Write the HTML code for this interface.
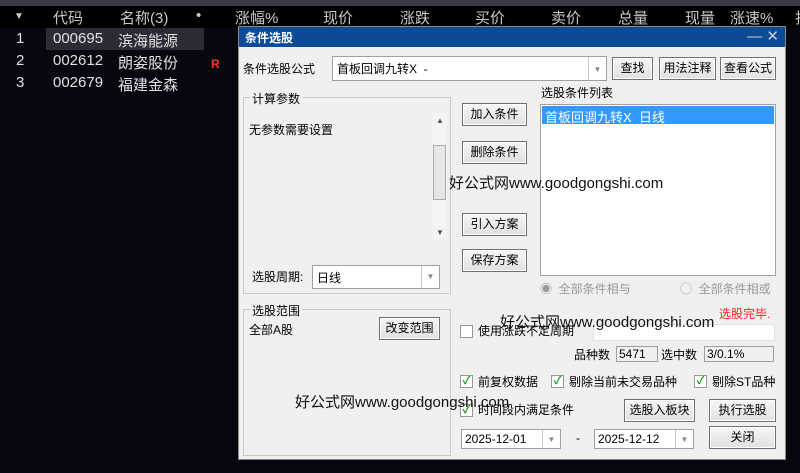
<!DOCTYPE html><html><head><meta charset="utf-8"><style>
*{margin:0;padding:0;box-sizing:border-box}
body{width:800px;height:473px;background:#07070f;font-family:"Liberation Sans","Noto Sans CJK SC",sans-serif;position:relative;overflow:hidden;color:#d8d8d8}
.a{position:absolute;white-space:nowrap}
.h{font-size:15px;color:#c8c8c8;top:7px}
.r{font-size:15px;color:#e0e0e0}
#dlg{position:absolute;left:238px;top:26px;width:548px;height:434px;background:#f0f0f0;border:1px solid #888;font-size:12px;color:#000}
#dlg .a{font-size:12px;line-height:16px}
.t{position:absolute;left:0;top:0;width:100%;height:20px;background:#0d4b96;color:#fff;font-weight:bold;padding:2px 6px}
.btn{position:absolute;border:1px solid #707070;background:linear-gradient(#f6f6f6,#e0e0e0);text-align:center;font-size:12px;line-height:20px;box-shadow:inset 0 0 0 1px #fff}
.box{position:absolute;background:#fff;border:1px solid #a0a0a0}
.grp{position:absolute;border:1px solid #c8c8c8}
.lg{position:absolute;top:-8px;left:6px;background:#f0f0f0;padding:0 2px;font-size:12px}
.dd{position:absolute;right:0;top:0;bottom:0;width:18px;border-left:1px solid #c8c8c8;color:#888;font-size:8px;text-align:center;padding-top:6px}
.cb{position:absolute;width:13px;height:13px;border:1px solid #999;background:#fff;font-size:11px;color:#1a9a1a;line-height:11px;text-align:center;font-weight:bold}
.wm{position:absolute;font-size:15px;color:#111;white-space:nowrap}
</style></head><body>
<div class="a" style="left:0;top:0;width:800px;height:6px;background:#3a3a48"></div>
<div class="a" style="left:0;top:6px;width:800px;height:22px;background:#000"></div>
<div class="a h" style="left:14px;font-size:10px;top:11px">▼</div>
<div class="a h" style="left:53px">代码</div><div class="a h" style="left:120px">名称(3)</div><div class="a h" style="left:196px">•</div>
<div class="a h" style="left:235px">涨幅%</div><div class="a h" style="left:323px">现价</div><div class="a h" style="left:400px">涨跌</div>
<div class="a h" style="left:475px">买价</div><div class="a h" style="left:551px">卖价</div><div class="a h" style="left:618px">总量</div>
<div class="a h" style="left:685px">现量</div><div class="a h" style="left:730px">涨速%</div><div class="a h" style="left:795px">折</div>
<div class="a" style="left:46px;top:28px;width:158px;height:22px;background:#2c2c36"></div>
<div class="a r" style="left:16px;top:30px">1</div><div class="a r" style="left:53px;top:30px">000695</div><div class="a r" style="left:118px;top:30px">滨海能源</div>
<div class="a r" style="left:16px;top:52px">2</div><div class="a r" style="left:53px;top:52px">002612</div><div class="a r" style="left:118px;top:52px">朗姿股份</div>
<div class="a" style="left:211px;top:57px;color:#ff3030;font-size:12px;font-weight:bold">R</div>
<div class="a r" style="left:16px;top:74px">3</div><div class="a r" style="left:53px;top:74px">002679</div><div class="a r" style="left:118px;top:74px">福建金森</div>
<div id="dlg">
<div class="t">条件选股<span style="position:absolute;right:6px;top:0;font-weight:normal;font-size:15px;color:#ccd">— ✕</span></div>
<div class="a" style="left:4px;top:34px">条件选股公式</div>
<div class="box" style="left:93px;top:29px;width:275px;height:25px"><span class="a" style="left:4px;top:4px">首板回调九转X &nbsp;-</span><div class="dd" style="padding-top:8px">▼</div></div>
<div class="btn" style="left:373px;top:30px;width:41px;height:23px">查找</div>
<div class="btn" style="left:420px;top:30px;width:57px;height:23px">用法注释</div>
<div class="btn" style="left:481px;top:30px;width:56px;height:23px">查看公式</div>
<div class="grp" style="left:4px;top:70px;width:208px;height:197px"><div class="lg">计算参数</div>
<div class="a" style="left:5px;top:24px">无参数需要设置</div>
<div class="a" style="left:188px;top:15px;width:15px;height:126px;background:#f4f4f4"><div class="a" style="left:1px;top:32px;width:13px;height:55px;border:1px solid #aaa;background:#e6e6e6"></div><span class="a" style="left:4px;top:0;font-size:8px;color:#555">▲</span><span class="a" style="left:4px;top:112px;font-size:8px;color:#555">▼</span></div>
<div class="a" style="left:8px;top:171px">选股周期:</div>
<div class="box" style="left:68px;top:167px;width:128px;height:24px"><span class="a" style="left:4px;top:4px">日线</span><div class="dd">▼</div></div></div>
<div class="btn" style="left:223px;top:76px;width:65px;height:23px">加入条件</div>
<div class="btn" style="left:223px;top:114px;width:65px;height:23px">删除条件</div>
<div class="btn" style="left:223px;top:186px;width:65px;height:23px">引入方案</div>
<div class="btn" style="left:223px;top:222px;width:65px;height:23px">保存方案</div>
<div class="a" style="left:302px;top:58px">选股条件列表</div>
<div class="box" style="left:301px;top:77px;width:236px;height:172px"><div style="background:#3399ff;color:#fff;height:18px;margin:1px;padding:1px 3px;font-size:13px">首板回调九转X &nbsp;日线</div></div>
<div class="a" style="left:301px;top:254px;color:#999">◉ &nbsp;全部条件相与</div>
<div class="a" style="left:441px;top:254px;color:#999">◯ &nbsp;全部条件相或</div>
<div class="grp" style="left:4px;top:282px;width:208px;height:147px"><div class="lg">选股范围</div>
<div class="a" style="left:5px;top:12px">全部A股</div>
<div class="btn" style="left:135px;top:7px;width:61px;height:23px">改变范围</div></div>
<div class="a" style="left:480px;top:279px;color:#ff2020">选股完毕.</div>
<div class="cb" style="left:221px;top:298px"></div><div class="a" style="left:239px;top:296px">使用涨跌不定周期</div>
<div class="box" style="left:354px;top:297px;width:182px;height:17px;border-color:#e0e0e0"></div>
<div class="a" style="left:335px;top:320px">品种数</div><div class="box" style="left:377px;top:319px;width:42px;height:16px;background:#f0f0f0;padding-left:2px;line-height:14px">5471</div>
<div class="a" style="left:422px;top:320px">选中数</div><div class="box" style="left:465px;top:319px;width:70px;height:16px;background:#f0f0f0;padding-left:2px;line-height:14px">3/0.1%</div>
<div class="cb" style="left:221px;top:348px">✓</div><div class="a" style="left:239px;top:347px">前复权数据</div>
<div class="cb" style="left:312px;top:348px">✓</div><div class="a" style="left:330px;top:347px">剔除当前未交易品种</div>
<div class="cb" style="left:455px;top:348px">✓</div><div class="a" style="left:473px;top:347px">剔除ST品种</div>
<div class="cb" style="left:221px;top:377px">✓</div><div class="a" style="left:239px;top:375px">时间段内满足条件</div>
<div class="btn" style="left:385px;top:372px;width:71px;height:23px">选股入板块</div>
<div class="btn" style="left:470px;top:372px;width:67px;height:23px">执行选股</div>
<div class="btn" style="left:470px;top:399px;width:67px;height:23px">关闭</div>
<div class="box" style="left:222px;top:402px;width:100px;height:20px"><span class="a" style="left:3px;top:1px">2025-12-01</span><div class="dd" style="padding-top:5px">▼</div></div>
<div class="a" style="left:337px;top:403px">-</div>
<div class="box" style="left:355px;top:402px;width:100px;height:20px"><span class="a" style="left:3px;top:1px">2025-12-12</span><div class="dd" style="padding-top:5px">▼</div></div>
</div>
<div class="wm" style="left:449px;top:172px">好公式网www.goodgongshi.com</div>
<div class="wm" style="left:500px;top:311px">好公式网www.goodgongshi.com</div>
<div class="wm" style="left:295px;top:391px">好公式网www.goodgongshi.com</div>
</body></html>
